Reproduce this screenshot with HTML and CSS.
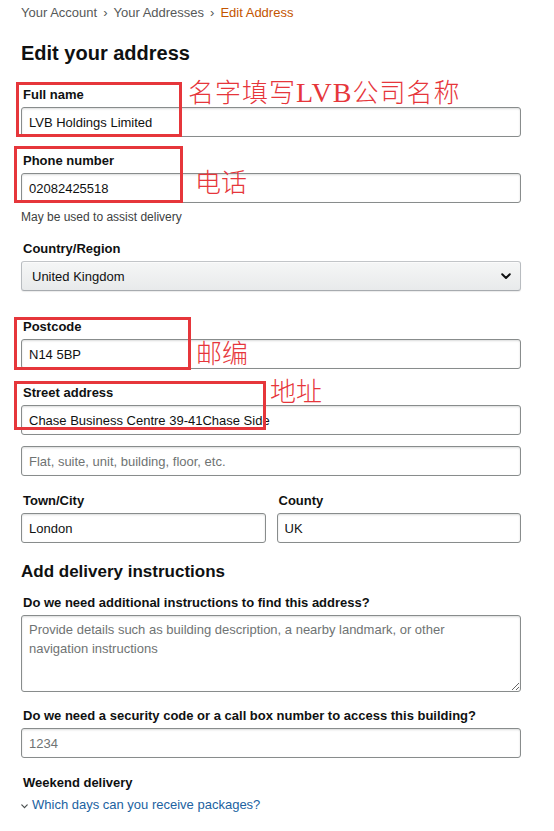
FILE: index.html
```html
<!DOCTYPE html>
<html lang="en">
<head>
<meta charset="utf-8">
<title>Edit Address</title>
<link rel="stylesheet" href="styles.css">
</head>
<body>
<div class="page">
  <nav class="crumbs">
    <span>Your Account</span><span class="sep">›</span><span>Your Addresses</span><span class="sep">›</span><span class="current">Edit Address</span>
  </nav>

  <h1 class="title">Edit your address</h1>

  <div class="field field-first">
    <label class="label">Full name</label>
    <input class="input" type="text" value="LVB Holdings Limited">
  </div>

  <div class="field">
    <label class="label">Phone number</label>
    <input class="input" type="text" value="02082425518">
    <div class="hint">May be used to assist delivery</div>
  </div>

  <div class="field field-after-hint">
    <label class="label">Country/Region</label>
    <div class="select">
      <span>United Kingdom</span>
      <svg class="chev" width="10" height="7" viewBox="0 0 10 7"><path d="M1.2 1.3 L5 5 L8.8 1.3" fill="none" stroke="#0f1111" stroke-width="2" stroke-linecap="round" stroke-linejoin="round"/></svg>
    </div>
  </div>

  <div class="field field-wide">
    <label class="label">Postcode</label>
    <input class="input" type="text" value="N14 5BP">
  </div>

  <div class="field">
    <label class="label">Street address</label>
    <input class="input" type="text" value="Chase Business Centre 39-41Chase Side">
    <input class="input input-next" type="text" placeholder="Flat, suite, unit, building, floor, etc.">
  </div>

  <div class="row field field-town">
    <div>
      <label class="label">Town/City</label>
      <input class="input" type="text" value="London">
    </div>
    <div>
      <label class="label">County</label>
      <input class="input" type="text" value="UK">
    </div>
  </div>

  <h2 class="subtitle">Add delivery instructions</h2>

  <div class="field field-sub">
    <label class="label">Do we need additional instructions to find this address?</label>
    <textarea class="area" placeholder="Provide details such as building description, a nearby landmark, or other navigation instructions"></textarea>
  </div>

  <div class="field">
    <label class="label">Do we need a security code or a call box number to access this building?</label>
    <input class="input" type="text" placeholder="1234">
  </div>

  <div class="field field-weekend">
    <div class="label">Weekend delivery</div>
    <a class="expander" href="#">
      <svg class="down" width="7" height="5" viewBox="0 0 7 5"><path d="M0.8 0.9 L3.5 3.6 L6.2 0.9" fill="none" stroke="#4a4f4f" stroke-width="1.2" stroke-linecap="round"/></svg>
      <span>Which days can you receive packages?</span>
    </a>
  </div>

  <div class="mark mark-name"></div>
  <div class="mark mark-phone"></div>
  <div class="mark mark-post"></div>
  <div class="mark mark-street"></div>

  <div class="note note-name">名字填写<span class="latin">LVB</span>公司名称</div>
  <div class="note note-phone">电话</div>
  <div class="note note-post">邮编</div>
  <div class="note note-street">地址</div>
</div>
</body>
</html>
```

FILE: styles.css
```css
html, body {
  margin: 0;
  padding: 0;
  background: #ffffff;
}

body {
  font-family: "Liberation Sans", Arial, sans-serif;
  color: #0f1111;
}

.page {
  position: relative;
  width: 500px;
  padding: 3px 33px 20px 21px;
}

.crumbs {
  font-size: 13px;
  line-height: 19px;
  color: #565959;
}

.crumbs .sep {
  margin: 0 6px;
}

.crumbs .current {
  color: #c45500;
}

.title {
  margin: 17px 0 0;
  font-size: 20px;
  line-height: 28px;
  font-weight: 700;
}

.field {
  margin-top: 15px;
}

.field-first {
  margin-top: 19px;
}

.field-after-hint {
  margin-top: 14px;
}

.field-wide {
  margin-top: 27px;
}

.field-town {
  margin-top: 16px;
}

.field-sub {
  margin-top: 10px;
}

.field-weekend {
  margin-top: 16px;
}

.label {
  display: block;
  padding-left: 2px;
  margin-bottom: 3px;
  font-size: 13px;
  line-height: 18px;
  font-weight: 700;
  color: #0f1111;
}

.input {
  display: block;
  box-sizing: border-box;
  width: 100%;
  height: 30px;
  margin: 0;
  padding: 0 7px;
  border: 1px solid #888c8c;
  border-radius: 3px;
  background: #ffffff;
  box-shadow: 0 1px 2px rgba(15, 17, 17, 0.15) inset;
  font-family: "Liberation Sans", Arial, sans-serif;
  font-size: 13px;
  color: #0f1111;
  outline: none;
}

.input::placeholder,
.area::placeholder {
  color: #6f7373;
  opacity: 1;
}

.input-next {
  margin-top: 11px;
}

.hint {
  margin-top: 5px;
  font-size: 12px;
  line-height: 18px;
  color: #3d4141;
}

.select {
  box-sizing: border-box;
  height: 30px;
  display: flex;
  align-items: center;
  justify-content: space-between;
  padding: 0 9px 0 10px;
  border: 1px solid;
  border-color: #c2c5c8 #b8bcc0 #a7abaf;
  border-radius: 3px;
  background: linear-gradient(to bottom, #f5f6f6, #e8eaeb);
  box-shadow: 0 1px 0 rgba(255, 255, 255, 0.6) inset, 0 1px 1px rgba(15, 17, 17, 0.08);
  font-size: 13px;
  color: #0f1111;
}

.chev {
  display: block;
}

.row {
  display: grid;
  grid-template-columns: 1fr 1fr;
  column-gap: 11px;
}

.subtitle {
  margin: 17px 0 0;
  font-size: 17px;
  line-height: 24px;
  font-weight: 700;
}

.area {
  display: block;
  box-sizing: border-box;
  width: 100%;
  height: 77px;
  margin: 0;
  padding: 4px 32px 4px 7px;
  border: 1px solid #888c8c;
  border-radius: 3px;
  box-shadow: 0 1px 2px rgba(15, 17, 17, 0.15) inset;
  font-family: "Liberation Sans", Arial, sans-serif;
  font-size: 13px;
  line-height: 19px;
  color: #0f1111;
  resize: vertical;
  outline: none;
}

.expander {
  display: flex;
  align-items: center;
  gap: 4px;
  margin-top: 2px;
  font-size: 13px;
  line-height: 20px;
  color: #2162a1;
  text-decoration: none;
}

.down {
  display: block;
  margin-top: 2px;
}

/* red annotation overlays */
.mark {
  position: absolute;
  box-sizing: border-box;
  border: 3px solid #e6363b;
}

.mark-name {
  left: 16px;
  top: 82px;
  width: 166px;
  height: 55px;
}

.mark-phone {
  left: 14px;
  top: 146px;
  width: 169px;
  height: 57px;
}

.mark-post {
  left: 14px;
  top: 317px;
  width: 177px;
  height: 53px;
}

.mark-street {
  left: 14px;
  top: 381px;
  width: 252px;
  height: 49px;
}

.note {
  position: absolute;
  font-family: "Noto Sans CJK SC", "Noto Sans CJK JP", sans-serif;
  font-weight: 300;
  font-size: 26px;
  line-height: 26px;
  color: #e6363b;
  white-space: nowrap;
}

.note .latin {
  font-family: "Liberation Serif", "Times New Roman", serif;
  font-weight: 400;
  font-size: 28px;
}

.note-name {
  left: 188px;
  top: 78px;
  letter-spacing: 1px;
}

.note-phone {
  left: 195px;
  top: 168px;
}

.note-post {
  left: 196px;
  top: 339px;
}

.note-street {
  left: 270px;
  top: 377px;
}
```
